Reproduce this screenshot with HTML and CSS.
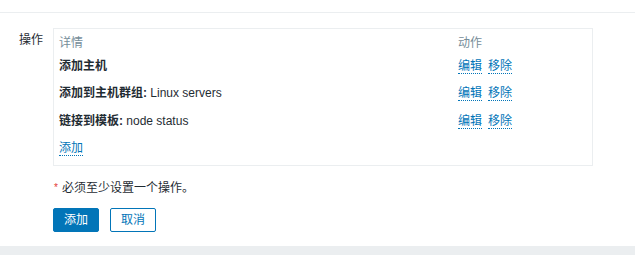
FILE: index.html
```html
<!DOCTYPE html>
<html>
  <head>
    <link rel="stylesheet" href="styles.css">
  </head>
  <body>
  <div class="page">
    <div class="form">
      <div class="form-row">
        <label class="form-label">操作</label>
        <div class="form-field">
          <div class="op-box">
            <table class="op-table">
              <thead>
                <tr>
                  <th class="col-details">详情</th>
                  <th>动作</th>
                </tr>
              </thead>
              <tbody>
                <tr>
                  <td><b>添加主机</b></td>
                  <td class="actions"><a class="link">编辑</a><a class="link">移除</a></td>
                </tr>
                <tr>
                  <td><b>添加到主机群组:</b> Linux servers</td>
                  <td class="actions"><a class="link">编辑</a><a class="link">移除</a></td>
                </tr>
                <tr>
                  <td><b>链接到模板:</b> node status</td>
                  <td class="actions"><a class="link">编辑</a><a class="link">移除</a></td>
                </tr>
                <tr>
                  <td colspan="2"><a class="link">添加</a></td>
                </tr>
              </tbody>
            </table>
          </div>
        </div>
      </div>
      <div class="form-row note-row">
        <div class="form-label"></div>
        <div class="form-field note"><span class="asterisk">*</span>必须至少设置一个操作。</div>
      </div>
      <div class="form-row button-row">
        <div class="form-label"></div>
        <div class="form-field buttons">
          <button class="btn btn-primary">添加</button>
          <button class="btn btn-alt">取消</button>
        </div>
      </div>
    </div>
    <div class="footer"></div>
  </div>
  </body>
</html>
```

FILE: styles.css
```css
body {
  margin: 0;
  background: #fff;
  font-family: "Liberation Sans", Arial, "Noto Sans CJK SC", sans-serif;
  font-size: 12px;
  color: #1f2c33;
}

.page {
  display: flex;
  flex-direction: column;
  height: 255px;
}

.form {
  margin-top: 12px;
  border-top: 1px solid #ebeef0;
  padding-top: 15px;
  flex: 1;
}

.form-row {
  display: flex;
}

.form-label {
  width: 43px;
  flex: none;
  text-align: right;
  padding-right: 10px;
  padding-top: 5px;
  line-height: 14px;
  box-sizing: content-box;
}

.form-field {
  flex: none;
}

.op-box {
  width: 528px;
  border: 1px solid #ebeef0;
  padding: 5px 5px 3px 5px;
}

.op-table {
  border-collapse: collapse;
  width: 100%;
  font-size: inherit;
}

.op-table th {
  font-weight: normal;
  color: #768d99;
  text-align: left;
  height: 18px;
  padding: 0;
  line-height: 14px;
}

.op-table .col-details {
  width: 399px;
}

.op-table td {
  height: 27.5px;
  padding: 0;
  line-height: 14px;
}

.actions .link + .link {
  margin-left: 6px;
}

.link {
  color: #0275b8;
  border-bottom: 1px dotted #0275b8;
  cursor: pointer;
}

.note-row {
  margin-top: 15px;
}

.note {
  line-height: 14px;
  padding-left: 1px;
}

.asterisk {
  color: #e33734;
  font-size: 10px;
  vertical-align: top;
  margin-right: 4px;
}

.button-row {
  margin-top: 13px;
}

.buttons {
  display: flex;
  gap: 11px;
}

.btn {
  height: 24px;
  padding: 0 10px;
  border-radius: 2px;
  font-family: inherit;
  font-size: 12px;
  line-height: 22px;
  border: 1px solid #0275b8;
}

.btn-primary {
  background: #0275b8;
  color: #fff;
}

.btn-alt {
  background: #fff;
  color: #0275b8;
}

.footer {
  height: 9px;
  background: #ebeef0;
}
```
